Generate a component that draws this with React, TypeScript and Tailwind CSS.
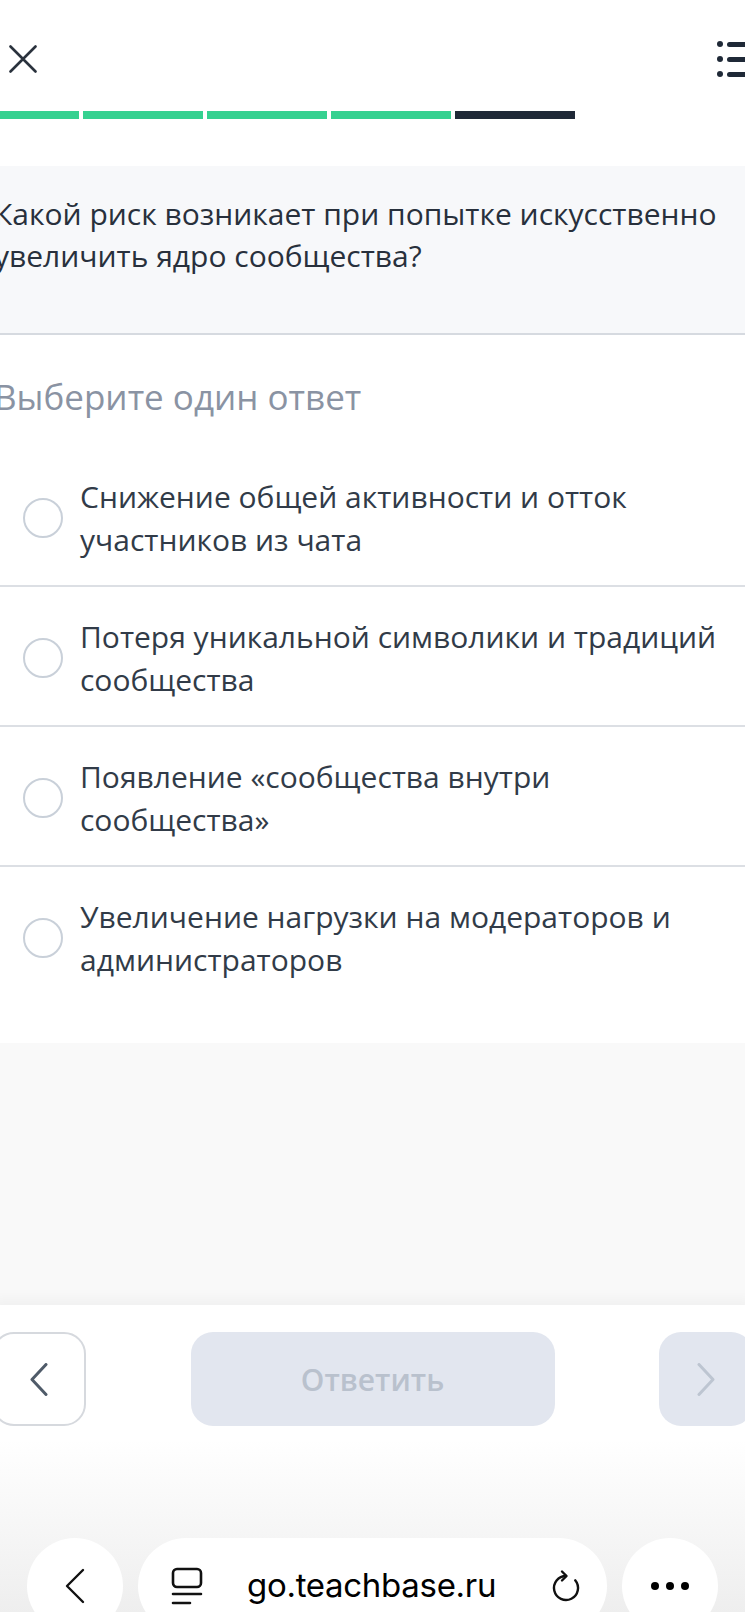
import { useState } from 'react';

const options = [
  'Снижение общей активности и отток участников из чата',
  'Потеря уникальной символики и традиций сообщества',
  'Появление «сообщества внутри сообщества»',
  'Увеличение нагрузки на модераторов и администраторов',
];

function CloseIcon() {
  return (
    <svg width="28" height="28" viewBox="0 0 28 28" fill="none" stroke="#2a323d" strokeWidth="2.6" strokeLinecap="round">
      <path d="M1.5 1.5 L26.5 26.5 M26.5 1.5 L1.5 26.5" />
    </svg>
  );
}

function ListIcon() {
  return (
    <div className="flex flex-col gap-[9px] w-[36px]">
      {[0, 1, 2].map((i) => (
        <div key={i} className="flex items-center gap-[4px]">
          <span className="w-[6px] h-[6px] rounded-full bg-[#1f2937]" />
          <span className="flex-1 h-[5px] rounded-full bg-[#1f2937]" />
        </div>
      ))}
    </div>
  );
}

function Chevron({ dir, color }: { dir: 'left' | 'right'; color: string }) {
  return (
    <svg width="18" height="33" viewBox="0 0 18 33" fill="none" stroke={color} strokeWidth="3" strokeLinecap="round" strokeLinejoin="round">
      {dir === 'left' ? <path d="M16 1.5 L2 16.5 L16 31.5" /> : <path d="M2 1.5 L16 16.5 L2 31.5" />}
    </svg>
  );
}

export default function App() {
  const [selected, setSelected] = useState<number | null>(null);

  return (
    <div className="w-[745px] h-[1612px] overflow-hidden bg-white flex flex-col" style={{ fontFamily: '"Open Sans", "Noto Sans", sans-serif' }}>
      {/* page content is scrolled 8px to the left */}
      <div className="w-[761px] -ml-[8px] flex flex-col">
        {/* Header */}
        <div className="pt-[39px] pl-[17px] h-[79px] flex items-center justify-between">
          <CloseIcon />
          <ListIcon />
        </div>

        {/* Progress */}
        <div className="mt-[32px] flex gap-[4px] h-[8px]">
          <div className="w-[87px] bg-[#35d190]" />
          <div className="w-[120px] bg-[#35d190]" />
          <div className="w-[120px] bg-[#35d190]" />
          <div className="w-[120px] bg-[#35d190]" />
          <div className="w-[120px] bg-[#1f2937]" />
        </div>

        {/* Question */}
        <div className="mt-[47px] bg-[#f7f8fa] border-b-2 border-[#d6dae0] pt-[27px] pb-[56px] pl-[2px] pr-[25px]">
          <p className="text-[30px] leading-[42px] text-[#28303c]">
            Какой риск возникает при попытке искусственно увеличить ядро сообщества?
          </p>
        </div>

        <p className="mt-[39px] pl-[2px] text-[35px] leading-[46px] text-[#8a93a3]">Выберите один ответ</p>

        {/* Options */}
        <div className="mt-[27px] pb-[38px]">
          {options.map((opt, i) => (
            <button
              key={i}
              onClick={() => setSelected(i)}
              className={`w-full flex items-center text-left pt-[28px] pb-[24px] pr-[25px] ${i < options.length - 1 ? 'border-b-2 border-[#dcdfe4]' : ''}`}
            >
              <span className="ml-[31px] w-[40px] h-[40px] shrink-0 rounded-full border-2 border-[#c9d0d9] flex items-center justify-center">
                {selected === i && <span className="w-[20px] h-[20px] rounded-full bg-[#35d190]" />}
              </span>
              <span className="ml-[17px] text-[30px] leading-[43px] text-[#313b48]">{opt}</span>
            </button>
          ))}
        </div>

        <div className="h-[262px] bg-[#f9f9f9]" />

        {/* Footer */}
        <div className="bg-white shadow-[0_-6px_14px_rgba(0,0,0,0.04)] pt-[27px] pb-[14px] flex items-center justify-between">
          <button className="w-[94px] h-[94px] rounded-[22px] border-2 border-[#d6d9de] bg-white flex items-center justify-center">
            <Chevron dir="left" color="#4f5b69" />
          </button>
          <button className="w-[364px] h-[94px] rounded-[22px] bg-[#e2e6ef] text-[30px] font-semibold text-[#b9c1cd]">
            Ответить
          </button>
          <button className="w-[94px] h-[94px] rounded-[22px] bg-[#e2e6ef] flex items-center justify-center">
            <Chevron dir="right" color="#bdc5d1" />
          </button>
        </div>
      </div>

      {/* Browser bar */}
      <div className="flex-1 bg-gradient-to-b from-white to-[#ececec] pt-[98px] px-[27px] flex gap-[15px]" style={{ fontFamily: 'Inter, "Liberation Sans", sans-serif' }}>
        <div className="w-[96px] h-[96px] shrink-0 rounded-full bg-white flex items-center justify-center">
          <svg width="22" height="36" viewBox="0 0 22 36" fill="none" stroke="#111" strokeWidth="2.4" strokeLinecap="round" strokeLinejoin="round">
            <path d="M19 2 L3 18 L19 34" />
          </svg>
        </div>
        <div className="flex-1 h-[96px] rounded-full bg-white flex items-center pl-[33px] pr-[25px]">
          <svg width="32" height="38" viewBox="0 0 32 38" fill="none" stroke="#111" strokeWidth="2.6" strokeLinecap="round">
            <rect x="2" y="2" width="28" height="18" rx="4" />
            <path d="M2 27 H30 M2 36 H19" />
          </svg>
          <span className="ml-[44px] text-[33px] text-black tracking-[-0.3px]">go.teachbase.ru</span>
          <svg className="ml-auto" width="32" height="38" viewBox="0 0 32 38" fill="none" stroke="#111" strokeWidth="2.4" strokeLinecap="round" strokeLinejoin="round">
            <path d="M16 9 A12 12 0 1 0 25.2 13.3" />
            <path d="M12 4.5 L16.5 9 L12 13.5" />
          </svg>
        </div>
        <div className="w-[96px] h-[96px] shrink-0 rounded-full bg-white flex items-center justify-center gap-[7px]">
          <span className="w-[8px] h-[8px] rounded-full bg-black" />
          <span className="w-[8px] h-[8px] rounded-full bg-black" />
          <span className="w-[8px] h-[8px] rounded-full bg-black" />
        </div>
      </div>
    </div>
  );
}
